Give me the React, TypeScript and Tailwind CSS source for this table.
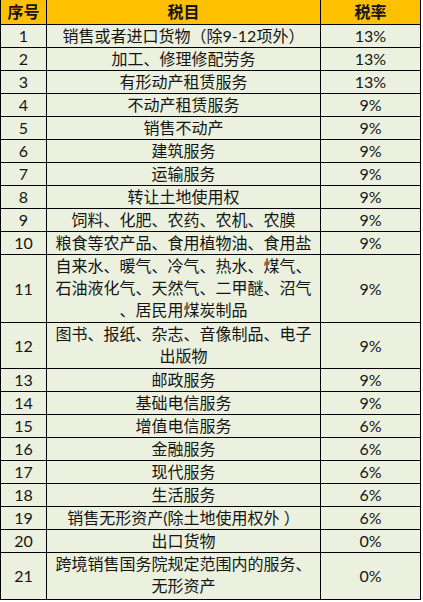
const rows: { no: string; item: string[]; rate: string; pad?: string }[] = [
  { no: "1", item: ["销售或者进口货物（除9-12项外）"], rate: "13%" },
  { no: "2", item: ["加工、修理修配劳务"], rate: "13%" },
  { no: "3", item: ["有形动产租赁服务"], rate: "13%" },
  { no: "4", item: ["不动产租赁服务"], rate: "9%" },
  { no: "5", item: ["销售不动产"], rate: "9%" },
  { no: "6", item: ["建筑服务"], rate: "9%" },
  { no: "7", item: ["运输服务"], rate: "9%" },
  { no: "8", item: ["转让土地使用权"], rate: "9%" },
  { no: "9", item: ["饲料、化肥、农药、农机、农膜"], rate: "9%" },
  { no: "10", item: ["粮食等农产品、食用植物油、食用盐"], rate: "9%" },
  {
    no: "11",
    item: [
      "自来水、暖气、冷气、热水、煤气、",
      "石油液化气、天然气、二甲醚、沼气",
      "、居民用煤炭制品",
    ],
    rate: "9%",
    pad: "pb-px",
  },
  { no: "12", item: ["图书、报纸、杂志、音像制品、电子", "出版物"], rate: "9%", pad: "pb-px" },
  { no: "13", item: ["邮政服务"], rate: "9%" },
  { no: "14", item: ["基础电信服务"], rate: "9%" },
  { no: "15", item: ["增值电信服务"], rate: "6%" },
  { no: "16", item: ["金融服务"], rate: "6%" },
  { no: "17", item: ["现代服务"], rate: "6%" },
  { no: "18", item: ["生活服务"], rate: "6%" },
  { no: "19", item: ["销售无形资产(除土地使用权外 ）"], rate: "6%" },
  { no: "20", item: ["出口货物"], rate: "0%" },
  { no: "21", item: ["跨境销售国务院规定范围内的服务、", "无形资产"], rate: "0%", pad: "pb-[2px]" },
];

export default function App() {
  return (
    <div className="bg-white min-h-screen font-['Lato','Noto_Sans_CJK_SC',sans-serif] text-[16px] text-[#151515]">
      <table className="border-collapse w-[421px] table-fixed">
        <colgroup>
          <col className="w-[46px]" />
          <col className="w-[274px]" />
          <col />
        </colgroup>
        <thead>
          <tr className="bg-[#ffc000] font-bold leading-[24px]">
            <th className="border border-t-0 border-black p-0 text-center font-bold">序号</th>
            <th className="border border-t-0 border-black p-0 text-center font-bold">税目</th>
            <th className="border border-t-0 border-black p-0 text-center font-bold">税率</th>
          </tr>
        </thead>
        <tbody>
          {rows.map((r) => (
            <tr key={r.no} className="bg-[#ebf1de] leading-[22px]">
              <td className="border border-black p-0 text-center">{r.no}</td>
              <td className={`border border-black p-0 text-center whitespace-nowrap ${r.pad ?? ""}`}>
                {r.item.map((line, i) => (
                  <div key={i}>{line}</div>
                ))}
              </td>
              <td className="border border-black p-0 text-center">{r.rate}</td>
            </tr>
          ))}
        </tbody>
      </table>
    </div>
  );
}
